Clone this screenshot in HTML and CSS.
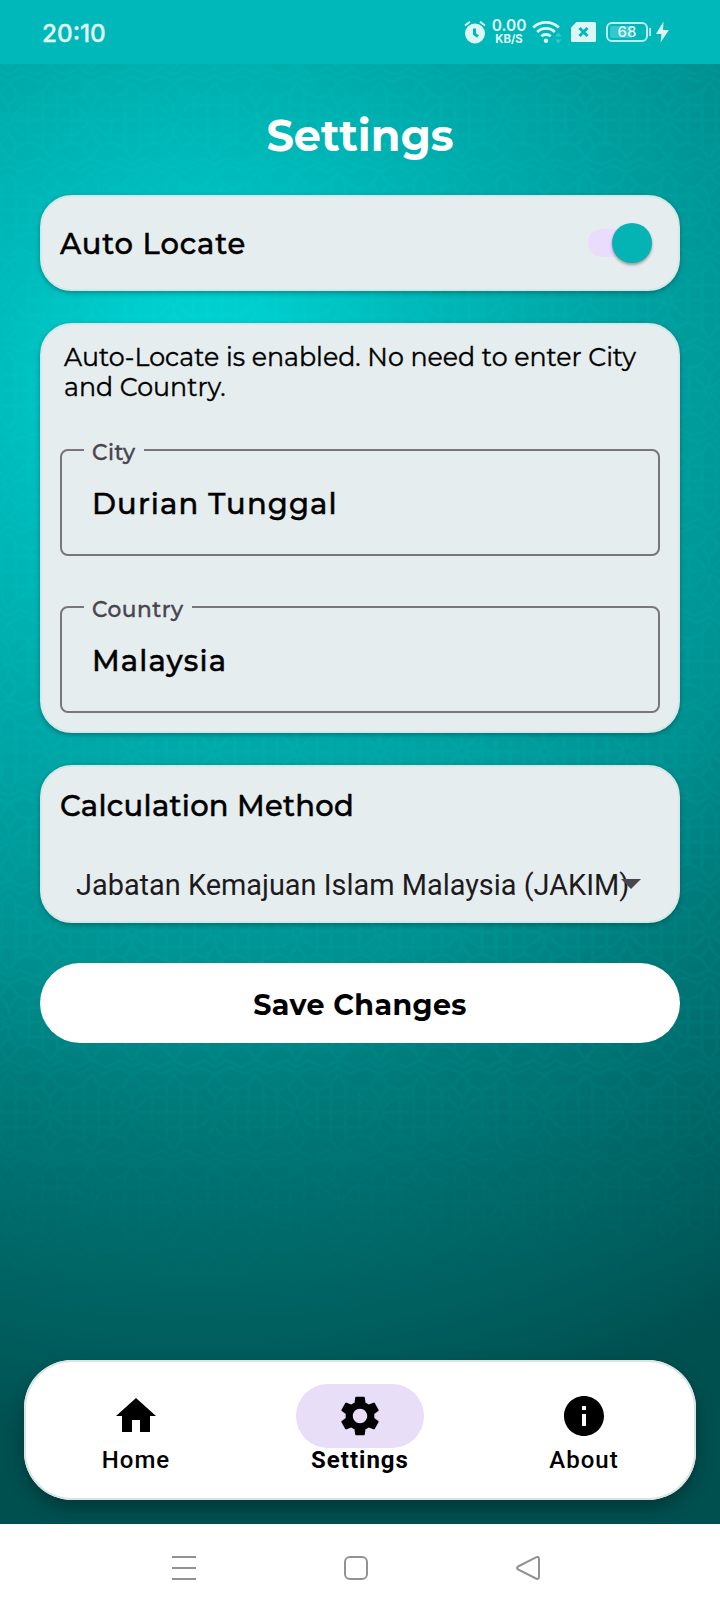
FILE: index.html
```html
<!DOCTYPE html>
<html lang="en">
<head>
<meta charset="utf-8">
<title>Settings</title>
<link rel="stylesheet" href="styles.css">
</head>
<body>
<div class="phone">
  <header class="status">
    <span class="clock">20:10</span>
    <div class="status-icons">
      <svg class="ic-alarm" width="22" height="24" viewBox="0 0 22 24"><circle cx="11" cy="13.500" r="10"/><path class="line" d="M1 5.500 6 1.700M16 1.700l5 3.800"/><path class="cut" d="M10.500 8.500v5.500l3.500 2.500"/></svg>
      <div class="speed"><b>0.00</b><i>KB/S</i></div>
      <svg class="ic-wifi" width="30" height="24" viewBox="0 0 30 24"><path class="line w3" d="M1.200 7.500a18.500 18.500 0 0 1 25.600 0M5.200 12a12.500 12.500 0 0 1 17.600 0M9.300 16.300a7 7 0 0 1 9.400 0"/><circle cx="14" cy="20.800" r="2.200"/><path class="faint" d="M23 16.500l3.300-4 3.300 4zM23 19.500l3.300 4 3.300-4z"/></svg>
      <svg class="ic-sim" width="25" height="20" viewBox="0 0 25 20"><path d="M5.500 0H23.500Q25 0 25 1.500V18.500Q25 20 23.500 20H1.500Q0 20 0 18.500V5.500z"/><path class="cut" d="M8.500 6l8 8M16.500 6l-8 8"/></svg>
      <div class="battery"><span>68</span></div>
      <svg class="ic-bolt" width="13" height="22" viewBox="0 0 13 22"><path d="M7.500 0.500 0 13H5.500L4.500 21.500 13 9H7z"/></svg>
    </div>
  </header>
  <div class="app">
    <svg class="pattern" width="720" height="1270" aria-hidden="true">
      <defs>
        <g id="rosette">
          <circle r="4.500"/>
          <path d="M4.500 0H41M-4.500 0H-41M0-4.500V-14M0 4.500V14M3 -3 15-15M3 3 15 15M-3 3-15 15M-3-3-15-15"/>
          <path d="M0-14 9-26 0-38-9-26zM0 14 9 26 0 38-9 26z"/>
          <path d="M15-15H41M15 15H41M-15-15H-41M-15 15H-41M20-22V22M-20-22V22M34-28V28M-34-28V28"/>
          <path d="M9-26 20-22 34-28 41-38M9 26 20 22 34 28 41 38M-9-26-20-22-34-28-41-38M-9 26-20 22-34 28-41 38"/>
          <path d="M0-38 15-45 30-38 41-45M0-38-15-45-30-38-41-45M0 38 15 45 30 38 41 45M0 38-15 45-30 38-41 45"/>
        </g>
        <pattern id="lattice" width="82.400" height="180.400" patternUnits="userSpaceOnUse" patternTransform="translate(50 11)">
          <g fill="none" stroke="#00ffff" stroke-width="3.500">
            <use href="#rosette" x="41.200" y="45.100"/>
            <use href="#rosette" x="0" y="135.300"/>
            <use href="#rosette" x="82.400" y="135.300"/>
          </g>
        </pattern>
      </defs>
      <rect width="720" height="1270" fill="url(#lattice)"/>
    </svg>
    <main class="content">
      <h1>Settings</h1>
      <section class="card locate">
        <span class="label">Auto Locate</span>
        <div class="switch"><div class="thumb"></div></div>
      </section>
      <section class="card place">
        <p class="hint">Auto-Locate is enabled. No need to enter City<br>and Country.</p>
        <fieldset><legend>City</legend><span class="label value">Durian Tunggal</span></fieldset>
        <fieldset><legend>Country</legend><span class="label value">Malaysia</span></fieldset>
      </section>
      <section class="card method">
        <span class="label heading">Calculation Method</span>
        <div class="select"><span>Jabatan Kemajuan Islam Malaysia (JAKIM)</span><svg width="20" height="10" viewBox="0 0 20 10"><path d="M0 0h20L10 10z"/></svg></div>
      </section>
      <button class="save">Save Changes</button>
    </main>
    <nav class="tabs">
      <a class="tab"><div class="pill"><svg width="48" height="48" viewBox="0 0 24 24"><path d="M10 20v-6h4v6h5v-8h3L12 3 2 12h3v8z"/></svg></div><span>Home</span></a>
      <a class="tab active"><div class="pill"><svg width="48" height="48" viewBox="0 0 24 24"><path d="M19.140 12.940c.040-.300.060-.610.060-.940 0-.320-.020-.640-.070-.940l2.030-1.580c.180-.140.230-.410.120-.610l-1.920-3.320c-.120-.220-.370-.290-.590-.220l-2.390.960c-.500-.380-1.030-.700-1.620-.940l-.360-2.540c-.040-.240-.240-.410-.480-.410h-3.840c-.240 0-.430.170-.470.410l-.360 2.540c-.590.240-1.130.570-1.620.940l-2.390-.960c-.220-.080-.470 0-.590.220L2.740 8.870c-.120.210-.080.470.120.610l2.030 1.580c-.050.300-.090.630-.090.940s.020.640.070.940l-2.030 1.580c-.180.140-.230.410-.120.610l1.920 3.320c.120.220.370.290.590.220l2.390-.960c.500.380 1.030.700 1.620.940l.360 2.540c.050.240.240.410.480.410h3.840c.240 0 .440-.170.470-.410l.360-2.540c.590-.240 1.130-.560 1.620-.940l2.390.960c.220.080.470 0 .590-.220l1.920-3.320c.120-.220.070-.470-.120-.610l-2.010-1.580zM12 15.600c-1.980 0-3.600-1.620-3.600-3.600s1.620-3.600 3.600-3.600 3.600 1.620 3.600 3.600-1.620 3.600-3.600 3.600z"/></svg></div><span>Settings</span></a>
      <a class="tab"><div class="pill"><svg width="48" height="48" viewBox="0 0 24 24"><path d="M12 2C6.480 2 2 6.480 2 12s4.480 10 10 10 10-4.480 10-10S17.520 2 12 2zm1 15h-2v-6h2v6zm0-8h-2V7h2v2z"/></svg></div><span>About</span></a>
    </nav>
  </div>
  <footer class="sysnav">
    <svg width="24" height="24" viewBox="0 0 24 24"><path d="M0 1h24M0 12h24M0 23h24"/></svg>
    <svg width="24" height="24" viewBox="0 0 24 24"><rect x="1" y="1" width="22" height="22" rx="5"/></svg>
    <svg width="24" height="24" viewBox="0 0 24 24"><path d="M2 10.500 20 1.300Q23 0 23 3V20.500Q23 24 20 22.500L2 13.500Q0 12 2 10.500z"/></svg>
  </footer>
</div>
</body>
</html>
```

FILE: styles.css
```css
* { box-sizing: border-box; }
body { margin: 0; font-family: Montserrat, Inter, "Liberation Sans", sans-serif; color: #000; }
.phone { width: 720px; height: 1612px; display: flex; flex-direction: column; overflow: hidden; }

.status { height: 64px; background: #00b8ba; display: flex; align-items: center; justify-content: space-between; padding: 0 51px 0 42px; color: #e2f8f8; }
.clock { font: 500 24.300px/30px Inter, sans-serif; padding-top: 1px; -webkit-text-stroke: .3px; }
.status-icons { display: flex; align-items: center; }
.status-icons svg { fill: #dcf6f6; display: block; flex: none; }
.status-icons .line { fill: none; stroke: #dcf6f6; stroke-width: 2; }
.status-icons .w3 { stroke-width: 2.800; }
.status-icons .cut { fill: none; stroke: #00b8ba; stroke-width: 3; }
.status-icons .faint { fill: #35c8ca; }
.speed { width: 34px; margin: 0 6px; display: flex; flex-direction: column; align-items: center; font-family: Inter, sans-serif; }
.speed b { font-size: 15.500px; line-height: 14px; font-weight: 600; }
.speed i { font-size: 11.300px; line-height: 12px; font-style: normal; font-weight: 700; }
.ic-sim { margin: 0 10px 0 9px; }
.battery { position: relative; width: 42px; height: 20px; border: 2px solid #b8eced; border-radius: 6px; display: flex; align-items: center; justify-content: center; font: 500 15px/16px Inter, sans-serif; background: linear-gradient(90deg, #35c8ca 66%, transparent 66%) content-box; padding: 2px; margin-right: 8px; }
.battery::after { content: ""; position: absolute; right: -5px; top: 4px; width: 2px; height: 8px; background: #a8e8e8; }

.app { position: relative; height: 1460px; display: flex; flex-direction: column; justify-content: space-between; padding: 0 24px 24px;
  background: radial-gradient(circle at 200px 316px, #00d4d4 0, #00cdcd 90px, #00b9b9 220px, #00a8a8 374px, #009090 600px, #007b7b 715px, #006d6d 830px, #005b5b 990px, #005050 1070px); }
.pattern { position: absolute; left: 0; top: 0; opacity: .038; mask-image: linear-gradient(#000 0, #000 75%, transparent 98%); }
.content { position: relative; padding: 0 16px; display: flex; flex-direction: column; }
h1 { margin: 40px 0 0; height: 91px; color: #fff; font-size: 43px; line-height: 64px; font-weight: 700; text-align: center; }
.card { background: #e6edee; border: 2px solid #d5e7e6; border-radius: 32px; box-shadow: 0 2px 5px rgba(0, 50, 50, .4); margin-bottom: 32px; }
.label { display: block; font-size: 29px; line-height: 34px; font-weight: 500; letter-spacing: .850px; white-space: nowrap; -webkit-text-stroke: .450px; }
.locate { height: 96px; display: flex; align-items: center; justify-content: space-between; padding: 0 26px 0 18px; }
.locate .label { padding-top: 2px; }
.switch { width: 64px; height: 28px; border-radius: 14px; background: #eadcfd; display: flex; justify-content: flex-end; align-items: center; }
.thumb { width: 40px; height: 40px; border-radius: 50%; background: #04b4b4; box-shadow: 0 2px 3px rgba(0, 0, 0, .35); }
.place { height: 410px; padding: 17px 18px 0; }
.hint { margin: 0 0 34px 4px; font-size: 25.300px; line-height: 30px; height: 60px; font-weight: 400; white-space: nowrap; -webkit-text-stroke: .350px; }
fieldset { margin: 0 0 37px; height: 120px; border: 2px solid #79757c; border-radius: 8px; padding: 0 31px; }
legend { margin-left: -9px; padding: 4px 8px 0; font-size: 21.700px; line-height: 24px; height: 28px; font-weight: 500; letter-spacing: .500px; color: #49454f; -webkit-text-stroke: .350px; }
.value { margin-top: 23px; margin-left: -1px; letter-spacing: 1.150px; }
.method { height: 158px; padding: 22px 18px 0; margin-bottom: 40px; }
.heading { letter-spacing: .280px; }
.select { display: flex; align-items: center; margin: 43px 0 0 16px; font: 28.900px/38px Roboto, sans-serif; color: #1d1b20; white-space: nowrap; }
.select svg { fill: #49454f; margin: -2px 0 0 -8px; flex: none; }
.save { height: 80px; border: 0; border-radius: 40px; background: #fff; padding: 4px 0 0; font: 700 28.500px/34px Montserrat, Inter, sans-serif; letter-spacing: .400px; color: #000; }

.tabs { position: relative; height: 140px; display: flex; background: #fff; border-radius: 48px; box-shadow: inset 0 0 0 2px #dbe4e3, 0 8px 18px rgba(0, 0, 0, .3); padding-top: 24px; }
.tab { flex: 1; display: flex; flex-direction: column; align-items: center; font: 500 24px/24px Roboto, sans-serif; letter-spacing: 1px; }
.pill { width: 128px; height: 64px; border-radius: 32px; display: flex; align-items: center; justify-content: center; }
.active .pill { background: #e8def8; }
.active { font-weight: 700; }
.sysnav { height: 88px; background: #fff; display: flex; justify-content: center; align-items: center; gap: 148px; padding-right: 8px; }
.sysnav svg { fill: none; stroke: #929292; stroke-width: 2; }
```
